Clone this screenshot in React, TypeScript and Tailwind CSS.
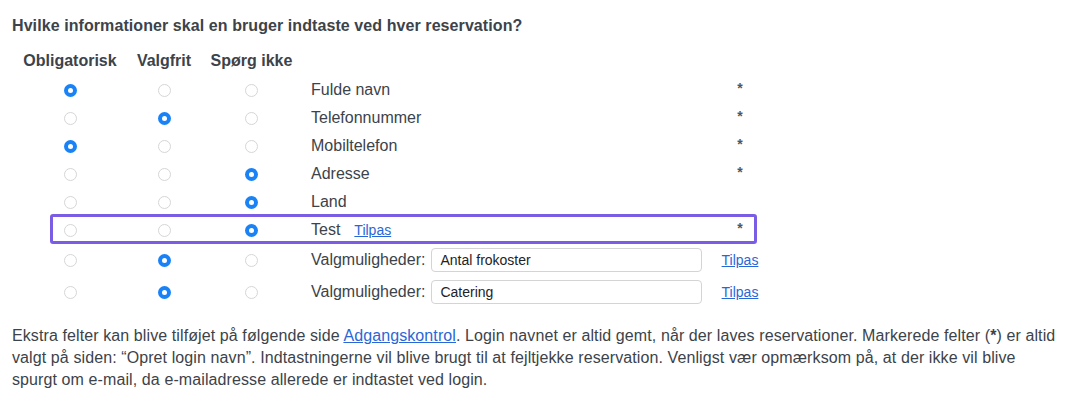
import React from "react";

type Choice = 0 | 1 | 2;

function Radio({ checked }: { checked: boolean }) {
  return checked ? (
    <span className="inline-flex h-[13px] w-[13px] items-center justify-center rounded-full bg-[#1a82f7] align-middle">
      <span className="h-[5px] w-[5px] rounded-full bg-white" />
    </span>
  ) : (
    <span className="inline-block h-[13px] w-[13px] rounded-full border border-[#d6d6d6] bg-white align-middle" />
  );
}

const rows: { label: string; choice: Choice; star?: boolean; tilpas?: boolean }[] = [
  { label: "Fulde navn", choice: 0, star: true },
  { label: "Telefonnummer", choice: 1, star: true },
  { label: "Mobiltelefon", choice: 0, star: true },
  { label: "Adresse", choice: 2, star: true },
  { label: "Land", choice: 2 },
  { label: "Test", choice: 2, star: true, tilpas: true },
];

const optionRows = [
  { value: "Antal frokoster", choice: 1 as Choice },
  { value: "Catering", choice: 1 as Choice },
];

function RadioCells({ choice }: { choice: Choice }) {
  return (
    <>
      <td className="w-[116px] p-0 text-center">
        <Radio checked={choice === 0} />
      </td>
      <td className="w-[72px] p-0 text-center">
        <Radio checked={choice === 1} />
      </td>
      <td className="w-[103px] p-0 text-center">
        <Radio checked={choice === 2} />
      </td>
    </>
  );
}

export default function App() {
  return (
    <div className="bg-white pl-3 pr-1 pt-4 font-['Liberation_Sans',Arial,sans-serif] text-[16px] text-[#3c434a]">
      <h3 className="h-5 text-[16px] font-bold leading-5 tracking-[0.08px]">
        Hvilke informationer skal en bruger indtaste ved hver reservation?
      </h3>
      <div className="relative mt-[10px] w-fit">
        <table className="border-collapse">
          <thead>
            <tr className="h-[30px]">
              <th className="w-[116px] p-0 text-center font-bold">Obligatorisk</th>
              <th className="w-[72px] p-0 text-center font-bold">Valgfrit</th>
              <th className="w-[103px] p-0 text-center font-bold">Spørg ikke</th>
              <th className="w-[409px] p-0" />
              <th className="w-[56px] p-0" />
            </tr>
          </thead>
          <tbody>
            {rows.map((r) => (
              <tr key={r.label} className="h-[28px]">
                <RadioCells choice={r.choice} />
                <td className="p-0 pl-2 text-left">
                  {r.label}
                  {r.tilpas && (
                    <a href="#" className="ml-[14px] text-[14px] text-[#2a67d6] underline">
                      Tilpas
                    </a>
                  )}
                </td>
                <td className="p-0 text-center">
                  {r.star && <span className="relative -top-[2px] text-[14px] font-bold text-[#50575e]">*</span>}
                </td>
              </tr>
            ))}
            {optionRows.map((o) => (
              <tr key={o.value} className="h-[32px]">
                <RadioCells choice={o.choice} />
                <td className="p-0 pl-2 text-left">
                  <div className="flex items-center gap-[6px]">
                    <span>Valgmuligheder:</span>
                    <input
                      readOnly
                      value={o.value}
                      className="h-[24px] w-[271px] rounded-[4px] border border-[#d4d4d4] bg-white px-2 text-[14px] text-[#1d2327] outline-none"
                    />
                  </div>
                </td>
                <td className="p-0 text-center">
                  <a href="#" className="text-[14px] text-[#2a67d6] underline">
                    Tilpas
                  </a>
                </td>
              </tr>
            ))}
          </tbody>
        </table>
        <div className="pointer-events-none absolute left-[38px] top-[168px] h-[30px] w-[707px] rounded-[3px] border-[3px] border-[#7b5ce5]" />
      </div>
      <p className="mt-[17px] leading-[22px] tracking-[0.1px]">
        Ekstra felter kan blive tilføjet på følgende side{" "}
        <a href="#" className="text-[#2a67d6] underline">
          Adgangskontrol
        </a>
        . Login navnet er altid gemt, når der laves reservationer. Markerede felter (<b>*</b>) er altid
        <br />
        valgt på siden: “Opret login navn”. Indtastningerne vil blive brugt til at fejltjekke reservation. Venligst vær
        opmærksom på, at der ikke vil blive
        <br />
        spurgt om e-mail, da e-mailadresse allerede er indtastet ved login.
      </p>
    </div>
  );
}
